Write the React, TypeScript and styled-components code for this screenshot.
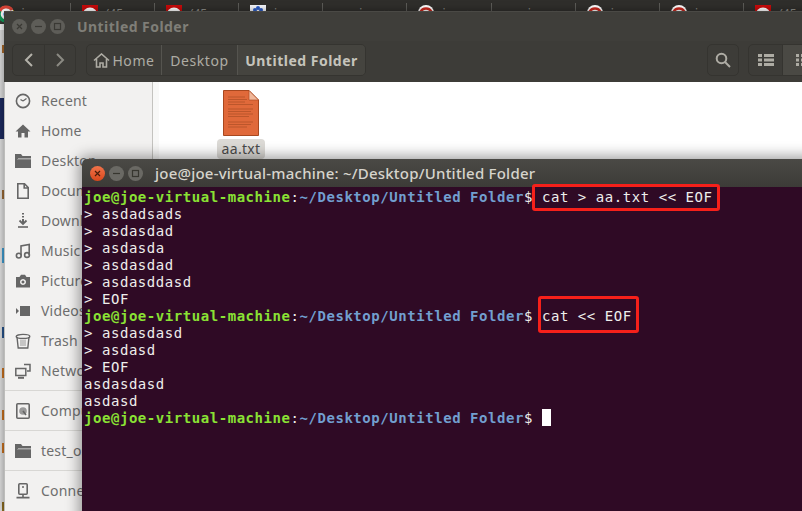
import React from "react";
import styled, { createGlobalStyle } from "styled-components";

const Global = createGlobalStyle`
  html, body { margin: 0; padding: 0; background: #dcdcdc; }
  * { box-sizing: border-box; }
`;

const UI = `"Noto Sans", "Open Sans", sans-serif`;

const Screen = styled.div`
  position: relative;
  width: 802px;
  height: 511px;
  overflow: hidden;
  background: #dcdcdc;
  font-family: ${UI};
`;

const TabStrip = styled.div`
  display: flex;
  height: 11px;
  margin-left: -13.5px;
  width: 842px;
  background: #2f2e2b;
`;

const Tab = styled.div`
  position: relative;
  flex: 0 0 84.2px;
  height: 11px;
  padding: 5px 0 0 11px;
  display: flex;
  gap: 8px;
  color: #8b8a85;
  font-size: 12px;
  line-height: 12px;
  &::after {
    content: "";
    position: absolute;
    right: 0;
    top: 3px;
    height: 8px;
    width: 1px;
    background: #5c5b57;
  }
`;

const TabText = styled.span<{ $plain?: boolean }>`
  display: block;
  height: 3px;
  overflow: hidden;
  margin-left: ${(p) => (p.$plain ? "25px" : "0")};
  margin-top: 3px;
  white-space: pre;
`;

const Desk = styled.div`
  display: flex;
  height: 500px;
`;

const LeftEdge = styled.div`
  flex: 0 0 4px;
  display: flex;
  flex-direction: column;
  background: #dcdcdc;
`;

const EdgeMark = styled.div<{ $h: number; $c: string; $tick?: boolean }>`
  flex: 0 0 ${(p) => p.$h}px;
  background: ${(p) =>
    p.$tick ? `linear-gradient(90deg, #dcdcdc 50%, ${p.$c} 50%)` : p.$c};
`;

const FileWindow = styled.div`
  position: relative;
  flex: 0 0 826px;
  height: 500px;
  display: flex;
  flex-direction: column;
  background: #fff;
  box-shadow: 0 0 8px rgba(0, 0, 0, 0.4);
`;

const FileTitleBar = styled.div`
  flex: 0 0 30px;
  display: flex;
  align-items: center;
  padding-left: 8px;
  background: #3f3e3a;
  border-top: 1px solid #4a4945;
`;

const Controls = styled.div<{ $gap: number }>`
  display: flex;
  gap: ${(p) => p.$gap}px;
`;

const Ctl = styled.span<{ $kind: "close" | "min" | "max"; $active?: boolean }>`
  width: 15px;
  height: 15px;
  border-radius: 50%;
  display: flex;
  align-items: center;
  justify-content: center;
  background: ${(p) =>
    p.$active
      ? p.$kind === "close"
        ? "linear-gradient(#f0734a, #d9481c)"
        : "#6a6964"
      : "#5e5d58"};
  color: ${(p) => (p.$active ? (p.$kind === "close" ? "#4a1d0a" : "#37362f") : "#3a3934")};
  & svg { display: block; }
`;

const FileTitle = styled.span`
  margin-left: 12px;
  color: #7f7e78;
  font-size: 14px;
  font-weight: 700;
  letter-spacing: 0.45px;
`;

const Toolbar = styled.div`
  flex: 0 0 41px;
  display: flex;
  align-items: flex-start;
  padding: 3px 6px 0 8px;
  background: #3d3c38;
  color: #a9a79f;
`;

const Group = styled.div`
  display: flex;
  height: 32px;
  border: 1px solid #353430;
  border-radius: 5px;
  overflow: hidden;
`;

const NavBtn = styled.div<{ $w: number; $dim?: boolean; $on?: boolean }>`
  width: ${(p) => p.$w}px;
  display: flex;
  align-items: center;
  justify-content: center;
  color: ${(p) => (p.$dim ? "#8b8a83" : "#b4b2aa")};
  background: ${(p) => (p.$on ? "#4a4944" : "transparent")};
  & + & { border-left: 1px solid #353430; }
`;

const PathBar = styled(Group)`
  margin-left: 10px;
`;

const Crumb = styled.div<{ $w: number; $on?: boolean }>`
  width: ${(p) => p.$w}px;
  display: flex;
  align-items: center;
  justify-content: center;
  gap: 2px;
  font-size: 14px;
  font-weight: ${(p) => (p.$on ? 700 : 400)};
  letter-spacing: ${(p) => (p.$on ? "0.5px" : "0.6px")};
  color: ${(p) => (p.$on ? "#c6c4bc" : "#aeaca4")};
  background: ${(p) => (p.$on ? "#45443f" : "transparent")};
  & + & { border-left: 1px solid #55544f; }
`;

const Spacer = styled.div`
  flex: 1;
`;

const ViewGroup = styled(Group)`
  margin-left: 9px;
`;

const FileBody = styled.div`
  flex: 1;
  display: flex;
  min-height: 0;
`;

const Sidebar = styled.div`
  flex: 0 0 149px;
  min-width: 0;
  overflow: hidden;
  padding-top: 4px;
  background: #f2f1f0;
  border-left: 1px solid #bdbdbb;
  border-right: 1px solid #c4c3bf;
`;

const SideRow = styled.div`
  height: 30px;
  display: flex;
  align-items: center;
  gap: 10px;
  padding: 0 0 1px 10px;
  color: #6e6e6e;
  font-size: 14px;
  letter-spacing: 0.2px;
  white-space: nowrap;
  & svg { flex: none; }
`;

const SideRule = styled.div`
  height: 1px;
  margin: 4px 0 5px;
  background: #d8d7d4;
`;

const Gutter = styled.div`
  flex: 0 0 6px;
  background: #f8f8f7;
`;

const Content = styled.div`
  flex: 1;
  padding: 8px 0 0 58px;
  background: #fff;
`;

const FileItem = styled.div`
  width: 48px;
  display: flex;
  flex-direction: column;
  align-items: center;
`;

const FileLabel = styled.div`
  margin-top: 3px;
  width: 48px;
  height: 20px;
  border-radius: 4px;
  background: #dcdad6;
  color: #4a4a4a;
  font-size: 14px;
  line-height: 19px;
  text-align: center;
  letter-spacing: 0.3px;
`;

const Terminal = styled.div`
  position: absolute;
  left: 82px;
  top: 159px;
  width: 760px;
  height: 400px;
  display: flex;
  flex-direction: column;
  box-shadow: 0 0 14px 3px rgba(0, 0, 0, 0.38);
  border-radius: 5px 5px 0 0;
  overflow: visible;
`;

const TermTitleBar = styled.div`
  flex: 0 0 28px;
  display: flex;
  align-items: center;
  padding-left: 8px;
  border-radius: 5px 5px 0 0;
  background: linear-gradient(#4a4945, #3c3b37);
`;

const TermTitle = styled.span`
  margin-left: 12px;
  color: #d6d4cc;
  font-size: 15px;
  font-weight: 500;
  letter-spacing: 0.22px;
`;

const TermBody = styled.div`
  flex: 1;
  padding: 1px 0 0 2px;
  background: #2f0a25;
  color: #eeeeec;
  font-family: "DejaVu Sans Mono", "Liberation Mono", monospace;
  font-size: 14px;
  letter-spacing: 0.55px;
`;

const Line = styled.div`
  height: 17px;
  line-height: 19px;
  white-space: pre;
`;

const User = styled.span`
  color: #8ae234;
  font-weight: 700;
`;

const Path = styled.span`
  color: #729fcf;
  font-weight: 700;
`;

const Cmd = styled.span<{ $l: number; $r: number; $t: number; $b: number }>`
  position: relative;
  &::after {
    content: "";
    position: absolute;
    left: ${(p) => p.$l}px;
    right: ${(p) => p.$r}px;
    top: ${(p) => p.$t}px;
    bottom: ${(p) => p.$b}px;
    border: 3px solid #f6201a;
    border-radius: 3px;
  }
`;

const Cursor = styled.span`
  display: inline-block;
  width: 9px;
  height: 17px;
  vertical-align: top;
  background: #fff;
`;

const DocSvg = styled.svg`
  display: block;
`;

type IconName =
  | "recent" | "home" | "folder" | "doc" | "download" | "music"
  | "camera" | "video" | "trash" | "network" | "disk" | "server";

const SideIcon = ({ name }: { name: IconName }) => {
  const c = "#666";
  const shapes: Record<IconName, React.ReactNode> = {
    recent: (
      <>
        <circle cx="8" cy="8" r="6.6" fill="none" stroke={c} strokeWidth="1.6" />
        <path d="M8 8 L11.5 5.5 M8 8 L5.5 6.5" stroke={c} strokeWidth="1.3" fill="none" />
      </>
    ),
    home: <path d="M8 1.5 L0.5 8.5 H3 V14.5 H6.5 V10 H9.5 V14.5 H13 V8.5 H15.5 Z" fill={c} />,
    folder: (
      <>
        <path d="M0 1 H6 L7.5 3 H16 V15 H0 Z" fill={c} />
        <path d="M3 5 H16 V6 H3 Z M2 6 H16 V6.5 H2 Z" fill="#a9a9a9" />
      </>
    ),
    doc: <path d="M2.8 0.8 H9.5 L13.2 4.5 V15.2 H2.8 Z M9.2 1 V5 H13" fill="none" stroke={c} strokeWidth="1.6" />,
    download: (
      <>
        <path d="M8 0 V1.5 M8 3 V4.5 M8 6 V10" stroke={c} strokeWidth="2" />
        <path d="M4.5 7.5 L8 11 L11.5 7.5" stroke={c} strokeWidth="1.8" fill="none" />
        <path d="M3 14 H13" stroke={c} strokeWidth="1.6" />
      </>
    ),
    music: (
      <>
        <circle cx="3.8" cy="12.6" r="2.4" fill="none" stroke={c} strokeWidth="1.6" />
        <circle cx="12" cy="12" r="2.4" fill="none" stroke={c} strokeWidth="1.6" />
        <path d="M6 12.5 V3 L14.2 1.5 V12" fill="none" stroke={c} strokeWidth="1.6" />
      </>
    ),
    camera: (
      <path fillRule="evenodd" d="M1 4 H4.5 L6 1.8 H10 L11.5 4 H15 V14.5 H1 Z M8 6 A3 3 0 1 0 8.01 6 Z M8 7.6 A1.5 1.5 0 1 1 7.99 7.6 Z" fill={c} />
    ),
    video: (
      <>
        <rect x="5" y="3" width="10" height="10" fill={c} />
        <path d="M1 5 L4 8 L1 11 Z" fill={c} />
      </>
    ),
    trash: (
      <>
        <path d="M2 4 L3.2 15 H12.8 L14 4" fill="none" stroke={c} strokeWidth="1.4" />
        <ellipse cx="8" cy="3.4" rx="6.8" ry="2" fill="none" stroke={c} strokeWidth="1.4" />
        <path d="M6 6.5 V13 M8 6.5 V13 M10 6.5 V13" stroke="#999" strokeWidth="1" />
      </>
    ),
    network: (
      <>
        <rect x="0.8" y="5.5" width="10" height="7" fill="none" stroke={c} strokeWidth="1.5" />
        <path d="M3 14.8 H9" stroke={c} strokeWidth="2" />
        <path d="M9 1.5 H15 V8 H12" fill="none" stroke={c} strokeWidth="1.5" />
      </>
    ),
    disk: (
      <>
        <rect x="1.8" y="0.8" width="12.4" height="14.4" rx="1" fill="none" stroke={c} strokeWidth="1.6" />
        <circle cx="8" cy="8" r="3.8" fill="#999" />
        <path d="M8 8 L11 12" stroke={c} strokeWidth="1.6" />
      </>
    ),
    server: (
      <>
        <rect x="3.8" y="0.8" width="8.4" height="10.4" rx="1" fill="none" stroke={c} strokeWidth="1.6" />
        <path d="M8 11.5 V14 M1.5 14.6 H14.5" stroke={c} strokeWidth="1.6" />
        <circle cx="8" cy="4" r="1" fill={c} />
      </>
    ),
  };
  return (
    <svg width="16" height="16" viewBox="0 0 16 16">
      {shapes[name]}
    </svg>
  );
};

const CtlGlyph = ({ kind }: { kind: "close" | "min" | "max" }) => (
  <svg width="9" height="9" viewBox="0 0 9 9" fill="none" stroke="currentColor" strokeWidth="1.2">
    {kind === "close" && <path d="M2 2 L7 7 M7 2 L2 7" />}
    {kind === "min" && <path d="M1 4.5 H8" />}
    {kind === "max" && <rect x="1.5" y="1.5" width="6" height="6" />}
  </svg>
);

const RedFavicon = () => (
  <svg width="16" height="16" viewBox="0 0 16 16" style={{ flex: "none" }}>
    <rect width="16" height="16" fill="#c60a0a" />
    <circle cx="8" cy="10" r="7.5" fill="#fff" />
    <circle cx="8" cy="11" r="5" fill="#c60a0a" />
  </svg>
);

const RoundFavicon = () => (
  <svg width="16" height="16" viewBox="0 0 16 16" style={{ flex: "none" }}>
    <circle cx="8" cy="8" r="8" fill="#fff" />
    <path d="M2.5 7 A6 6 0 0 1 13.5 7" stroke="#c8281e" strokeWidth="2.5" fill="none" />
  </svg>
);

const BlueFavicon = () => (
  <svg width="16" height="16" viewBox="0 0 16 16" style={{ flex: "none" }}>
    <rect width="16" height="16" fill="#f4f6fb" />
    <circle cx="5" cy="5" r="2" fill="#2a5bc4" />
    <circle cx="8" cy="3" r="2" fill="#2a5bc4" />
    <circle cx="11" cy="5" r="2" fill="#2a5bc4" />
  </svg>
);

const ChromeFavicon = () => (
  <svg width="16" height="20" viewBox="0 0 16 20" style={{ flex: "none" }}>
    <circle cx="8" cy="9" r="8" fill="#fff" />
    <path d="M1.5 7 A7 7 0 0 1 14 5" stroke="#db4437" strokeWidth="3" fill="none" />
    <path d="M2 6 A7 7 0 0 0 7 16" stroke="#0f9d58" strokeWidth="3" fill="none" />
    <path d="M14.5 6 A7 7 0 0 1 8 16" stroke="#f4b400" strokeWidth="3" fill="none" />
    <circle cx="8" cy="9" r="2.6" fill="#4285f4" />
  </svg>
);

const edgeMarks: [number, string, boolean?][] = [
  [13, "#3b3a36"], [6, "#f2f2f2"], [15, "#d9d9d9"], [8, "#a8682a", true], [45, "#d9d9d9"],
  [41, "#1d2a5e"], [51, "#dcdcdc"], [9, "#9b6a35", true], [49, "#dedede"], [15, "#3f9bd0", true],
  [64, "#dedede"], [11, "#27528a", true], [30, "#dcdcdc"], [10, "#c9711f", true], [32, "#dcdcdc"],
  [10, "#c9711f", true], [23, "#dcdcdc"], [10, "#c9711f", true], [49, "#dcdcdc"], [9, "#8a6a20", true],
];

type TabDef = { icon?: React.ReactNode; text: string };
const tabs: TabDef[] = [
  { icon: <ChromeFavicon />, text: "jzz   ×" },
  { icon: <RedFavicon />, text: "(45   ×" },
  { icon: <RedFavicon />, text: "(45   ×" },
  { icon: <BlueFavicon />, text: "jzz   ×" },
  { text: "jzz   ×" },
  { icon: <RoundFavicon />, text: "jzz   ×" },
  { text: "jzz   ×" },
  { icon: <RoundFavicon />, text: "jzz   ×" },
  { icon: <RoundFavicon />, text: "jzz   ×" },
  { icon: <RedFavicon />, text: "(45   ×" },
];

const places: { icon: IconName; label: string }[] = [
  { icon: "recent", label: "Recent" },
  { icon: "home", label: "Home" },
  { icon: "folder", label: "Desktop" },
  { icon: "doc", label: "Documents" },
  { icon: "download", label: "Downloads" },
  { icon: "music", label: "Music" },
  { icon: "camera", label: "Pictures" },
  { icon: "video", label: "Videos" },
  { icon: "trash", label: "Trash" },
  { icon: "network", label: "Network" },
];

const Prompt = () => (
  <>
    <User>joe@joe-virtual-machine</User>:<Path>~/Desktop/Untitled Folder</Path>$
  </>
);

const Dots = () => (
  <svg width="16" height="14" viewBox="0 0 16 14" fill="#aeaca4">
    <rect x="1" y="1" width="3" height="3" /><rect x="6" y="1" width="3" height="3" /><rect x="11" y="1" width="3" height="3" />
    <rect x="1" y="5.5" width="3" height="3" /><rect x="6" y="5.5" width="3" height="3" /><rect x="11" y="5.5" width="3" height="3" />
    <rect x="1" y="10" width="3" height="3" /><rect x="6" y="10" width="3" height="3" /><rect x="11" y="10" width="3" height="3" />
  </svg>
);

export default function App() {
  return (
    <Screen>
      <Global />
      <TabStrip>
        {tabs.map((t, i) => (
          <Tab key={i}>
            {t.icon}
            <TabText $plain={!t.icon}>{t.text}</TabText>
          </Tab>
        ))}
      </TabStrip>
      <Desk>
        <LeftEdge>
          {edgeMarks.map(([h, c, tick], i) => (
            <EdgeMark key={i} $h={h} $c={c} $tick={tick} />
          ))}
        </LeftEdge>
        <FileWindow>
          <FileTitleBar>
            <Controls $gap={4}>
              <Ctl $kind="close"><CtlGlyph kind="close" /></Ctl>
              <Ctl $kind="min"><CtlGlyph kind="min" /></Ctl>
              <Ctl $kind="max"><CtlGlyph kind="max" /></Ctl>
            </Controls>
            <FileTitle>Untitled Folder</FileTitle>
          </FileTitleBar>
          <Toolbar>
            <Group>
              <NavBtn $w={31}>
                <svg width="10" height="16" viewBox="0 0 10 16" fill="none" stroke="currentColor" strokeWidth="2">
                  <path d="M8 2 L2 8 L8 14" />
                </svg>
              </NavBtn>
              <NavBtn $w={31} $dim>
                <svg width="10" height="16" viewBox="0 0 10 16" fill="none" stroke="currentColor" strokeWidth="2">
                  <path d="M2 2 L8 8 L2 14" />
                </svg>
              </NavBtn>
            </Group>
            <PathBar>
              <Crumb $w={74}>
                <svg width="17" height="15" viewBox="0 0 17 15" fill="none" stroke="currentColor" strokeWidth="1.6">
                  <path d="M1 7.5 L8.5 1 L16 7.5 M3.5 6 V14 H7 V10 H10 V14 H13.5 V6" />
                </svg>
                Home
              </Crumb>
              <Crumb $w={76}>Desktop</Crumb>
              <Crumb $w={128} $on>Untitled Folder</Crumb>
            </PathBar>
            <Spacer />
            <Group>
              <NavBtn $w={30}>
                <svg width="16" height="16" viewBox="0 0 16 16" fill="none" stroke="#aeaca4" strokeWidth="2">
                  <circle cx="6.5" cy="6.5" r="4.8" />
                  <path d="M10 10 L15 15" />
                </svg>
              </NavBtn>
            </Group>
            <ViewGroup>
              <NavBtn $w={33}>
                <svg width="16" height="12" viewBox="0 0 16 12" fill="#aeaca4">
                  <rect x="0" y="0" width="4" height="3" /><rect x="6" y="0" width="10" height="3" />
                  <rect x="0" y="4.5" width="4" height="3" /><rect x="6" y="4.5" width="10" height="3" />
                  <rect x="0" y="9" width="4" height="3" /><rect x="6" y="9" width="10" height="3" />
                </svg>
              </NavBtn>
              <NavBtn $w={41} $on><Dots /></NavBtn>
            </ViewGroup>
          </Toolbar>
          <FileBody>
            <Sidebar>
              {places.map((p) => (
                <SideRow key={p.label}>
                  <SideIcon name={p.icon} />
                  {p.label}
                </SideRow>
              ))}
              <SideRule />
              <SideRow><SideIcon name="disk" />Computer</SideRow>
              <SideRule />
              <SideRow><SideIcon name="folder" />test_os</SideRow>
              <SideRule />
              <SideRow><SideIcon name="server" />Connect to Server</SideRow>
            </Sidebar>
            <Gutter />
            <Content>
              <FileItem>
                <DocSvg width="36" height="46" viewBox="0 0 36 46">
                  <path d="M0.5 0.5 H26 L35.5 10 V45.5 H0.5 Z" fill="#e0693a" stroke="#a8481f" />
                  <path d="M26 0.5 L35.5 10 H26 Z" fill="#f0b79a" stroke="#a8481f" strokeWidth="0.6" />
                  <path
                    d="M5 7 H22 M5 9.5 H24 M5 12 H22 M5 14.5 H30 M5 19 H30 M5 21.5 H28 M5 24 H30 M5 26.5 H26 M5 32 H30 M5 34.5 H28 M5 37 H24"
                    stroke="#a34a22"
                    strokeWidth="0.6"
                  />
                </DocSvg>
                <FileLabel>aa.txt</FileLabel>
              </FileItem>
            </Content>
          </FileBody>
        </FileWindow>
      </Desk>
      <Terminal>
        <TermTitleBar>
          <Controls $gap={4}>
            <Ctl $kind="close" $active><CtlGlyph kind="close" /></Ctl>
            <Ctl $kind="min" $active><CtlGlyph kind="min" /></Ctl>
            <Ctl $kind="max" $active><CtlGlyph kind="max" /></Ctl>
          </Controls>
          <TermTitle>joe@joe-virtual-machine: ~/Desktop/Untitled Folder</TermTitle>
        </TermTitleBar>
        <TermBody>
          <Line>
            <Prompt /> <Cmd $l={-10} $r={-7} $t={-5} $b={-6}>cat &gt; aa.txt &lt;&lt; EOF</Cmd>
          </Line>
          <Line>&gt; asdadsads</Line>
          <Line>&gt; asdasdad</Line>
          <Line>&gt; asdasda</Line>
          <Line>&gt; asdasdad</Line>
          <Line>&gt; asdasddasd</Line>
          <Line>&gt; EOF</Line>
          <Line>
            <Prompt /> <Cmd $l={-4} $r={-7} $t={-12} $b={-9}>cat &lt;&lt; EOF</Cmd>
          </Line>
          <Line>&gt; asdasdasd</Line>
          <Line>&gt; asdasd</Line>
          <Line>&gt; EOF</Line>
          <Line>asdasdasd</Line>
          <Line>asdasd</Line>
          <Line>
            <Prompt /> <Cursor />
          </Line>
        </TermBody>
      </Terminal>
    </Screen>
  );
}
